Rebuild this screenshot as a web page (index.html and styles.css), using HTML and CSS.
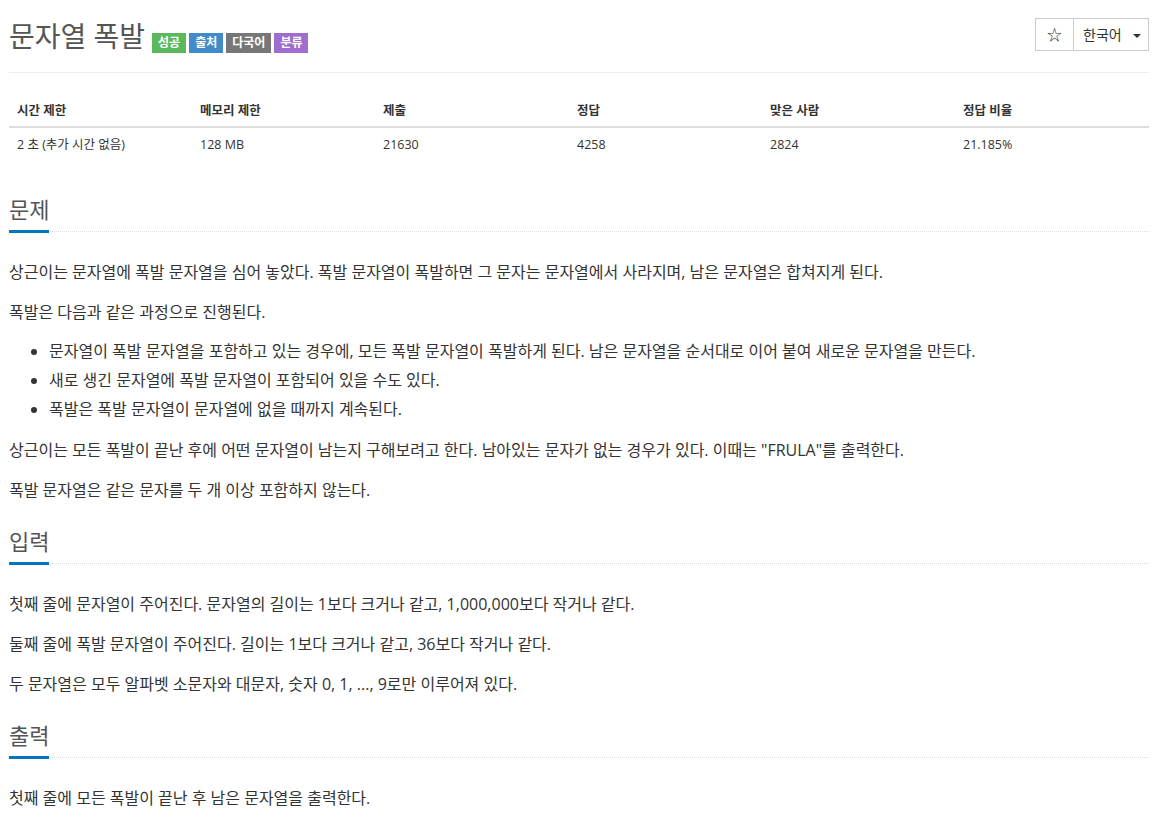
FILE: index.html
```html
<!DOCTYPE html>
<html lang="ko">

<head>
    <meta charset="UTF-8">
    <meta name="viewport" content="width=device-width, initial-scale=1.0">
    <title>문자열 폭발</title>
    <link rel="stylesheet" href="styles.css">
</head>

<body>
    <div class="page-header">
        <div class="title-wrap">
            <h1 class="problem-title">문자열 폭발</h1>
            <span class="label label-success">성공</span>
            <span class="label label-primary">출처</span>
            <span class="label label-default">다국어</span>
            <span class="label label-purple">분류</span>
        </div>
        <div class="btn-group">
            <a href="javascript:;" class="btn btn-star">&#9734;</a>
            <a href="javascript:;" class="btn btn-lang">한국어 <span class="caret"></span></a>
        </div>
    </div>

    <table class="problem-info">
        <colgroup>
            <col style="width:183px">
            <col style="width:183px">
            <col style="width:194px">
            <col style="width:193px">
            <col style="width:193px">
            <col>
        </colgroup>
        <thead>
            <tr>
                <th>시간 제한</th>
                <th>메모리 제한</th>
                <th>제출</th>
                <th>정답</th>
                <th>맞은 사람</th>
                <th>정답 비율</th>
            </tr>
        </thead>
        <tbody>
            <tr>
                <td>2 초 (추가 시간 없음)</td>
                <td>128 MB</td>
                <td>21630</td>
                <td>4258</td>
                <td>2824</td>
                <td>21.185%</td>
            </tr>
        </tbody>
    </table>

    <section class="problem-section">
        <div class="headline">
            <h2>문제</h2>
        </div>
        <div class="problem-text">
            <p>상근이는 문자열에 폭발 문자열을 심어 놓았다. 폭발 문자열이 폭발하면 그 문자는 문자열에서 사라지며, 남은 문자열은 합쳐지게 된다.</p>
            <p>폭발은 다음과 같은 과정으로 진행된다.</p>
            <ul>
                <li>문자열이 폭발 문자열을 포함하고 있는 경우에, 모든 폭발 문자열이 폭발하게 된다. 남은 문자열을 순서대로 이어 붙여 새로운 문자열을 만든다.</li>
                <li>새로 생긴 문자열에 폭발 문자열이 포함되어 있을 수도 있다.</li>
                <li>폭발은 폭발 문자열이 문자열에 없을 때까지 계속된다.</li>
            </ul>
            <p>상근이는 모든 폭발이 끝난 후에 어떤 문자열이 남는지 구해보려고 한다. 남아있는 문자가 없는 경우가 있다. 이때는 "FRULA"를 출력한다.</p>
            <p>폭발 문자열은 같은 문자를 두 개 이상 포함하지 않는다.</p>
        </div>
    </section>

    <section class="problem-section">
        <div class="headline">
            <h2>입력</h2>
        </div>
        <div class="problem-text">
            <p>첫째 줄에 문자열이 주어진다. 문자열의 길이는 1보다 크거나 같고, 1,000,000보다 작거나 같다.</p>
            <p>둘째 줄에 폭발 문자열이 주어진다. 길이는 1보다 크거나 같고, 36보다 작거나 같다.</p>
            <p>두 문자열은 모두 알파벳 소문자와 대문자, 숫자 0, 1, ..., 9로만 이루어져 있다.</p>
        </div>
    </section>

    <section class="problem-section">
        <div class="headline">
            <h2>출력</h2>
        </div>
        <div class="problem-text">
            <p>첫째 줄에 모든 폭발이 끝난 후 남은 문자열을 출력한다.</p>
        </div>
    </section>
</body>

</html>
```

FILE: styles.css
```css
* {
    margin: 0;
    padding: 0;
    box-sizing: border-box;
}

body {
    padding: 0 20px 0 9px;
    font-family: "Open Sans", "Noto Sans CJK KR", sans-serif;
    font-size: 14px;
    color: #333;
    background: #fff;
}

.page-header {
    display: flex;
    justify-content: space-between;
    align-items: flex-start;
    padding-top: 18px;
    height: 73px;
    border-bottom: 1px solid #eee;
}

.title-wrap {
    display: flex;
    align-items: flex-end;
    height: 35px;
}

.problem-title {
    font-size: 28px;
    font-weight: 400;
    line-height: 36px;
    color: #555;
    margin-right: 7px;
    position: relative;
    top: 1px;
}

.label {
    display: inline-block;
    height: 20px;
    line-height: 20px;
    padding: 0 6px;
    margin-right: 3px;
    font-size: 12px;
    font-weight: 700;
    color: #fff;
}

.label-success {
    background-color: #5cb85c;
}

.label-primary {
    background-color: #428bca;
}

.label-default {
    background-color: #777;
}

.label-purple {
    background-color: #a06dcf;
}

.btn-group {
    display: flex;
}

.btn {
    display: block;
    height: 33px;
    line-height: 31px;
    border: 1px solid #ccc;
    background: #fff;
    color: #333;
    text-decoration: none;
    font-size: 14px;
}

.btn-star {
    width: 39px;
    text-align: center;
    font-size: 15px;
}

.btn-lang {
    width: 76px;
    margin-left: -1px;
    padding-left: 9px;
}

.caret {
    display: inline-block;
    width: 0;
    height: 0;
    margin-left: 8px;
    vertical-align: middle;
    border-top: 4px solid #333;
    border-left: 4px solid transparent;
    border-right: 4px solid transparent;
}

.problem-info {
    width: 100%;
    table-layout: fixed;
    border-collapse: collapse;
    margin-top: 18px;
    font-size: 12.5px;
}

.problem-info th {
    text-align: left;
    font-weight: 700;
    padding: 10px 8px 5px;
    line-height: 20px;
    border-bottom: 2px solid #ddd;
}

.problem-info td {
    padding: 7px 8px;
    line-height: 20px;
}

.problem-section {
    margin-top: 32px;
}

.problem-section + .problem-section {
    margin-top: 23px;
}

.headline {
    display: flex;
    border-bottom: 1px dotted #ddd;
    margin-bottom: 28px;
}

.headline h2 {
    font-size: 22px;
    font-weight: 400;
    color: #555;
    line-height: 30px;
    padding-bottom: 6px;
    border-bottom: 3px solid #0076c0;
    margin-bottom: -2px;
}

.problem-text {
    font-size: 16px;
    line-height: 25px;
}

.problem-text p {
    margin-bottom: 15px;
}

.problem-text ul {
    padding-left: 40px;
    margin-top: -1px;
    margin-bottom: 16px;
}

.problem-text li {
    margin-bottom: 4px;
}
```
